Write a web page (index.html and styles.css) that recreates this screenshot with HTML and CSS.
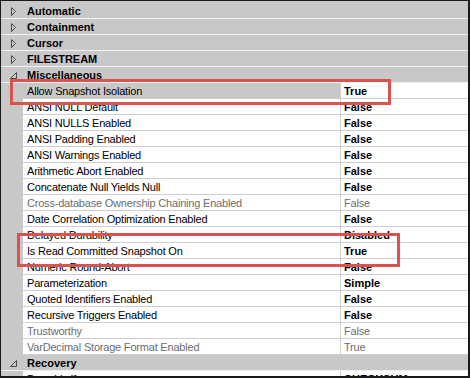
FILE: index.html
```html
<!DOCTYPE html>
<html lang="en">
<head>
    <meta charset="UTF-8">
    <meta name="viewport" content="width=device-width, initial-scale=1.0">
    <title>Database Properties - Options</title>
    <link rel="stylesheet" href="styles.css">
</head>
<body>

<div class="property-grid">
    <div class="category">
        <span class="toggle"><svg width="22" height="15"><polygon points="10.5,4.5 14.5,8.5 10.5,12.5" /></svg></span>
        <span class="label">Automatic</span>
    </div>
    <div class="category">
        <span class="toggle"><svg width="22" height="15"><polygon points="10.5,4.5 14.5,8.5 10.5,12.5" /></svg></span>
        <span class="label">Containment</span>
    </div>
    <div class="category">
        <span class="toggle"><svg width="22" height="15"><polygon points="10.5,4.5 14.5,8.5 10.5,12.5" /></svg></span>
        <span class="label">Cursor</span>
    </div>
    <div class="category">
        <span class="toggle"><svg width="22" height="15"><polygon points="10.5,4.5 14.5,8.5 10.5,12.5" /></svg></span>
        <span class="label">FILESTREAM</span>
    </div>
    <div class="category">
        <span class="toggle"><svg width="22" height="15"><polygon points="15.5,5.5 15.5,11.5 9.5,11.5" /></svg></span>
        <span class="label">Miscellaneous</span>
    </div>

    <div class="property selected"><span class="gutter"></span><span class="name">Allow Snapshot Isolation</span><span class="value">True</span></div>
    <div class="property"><span class="gutter"></span><span class="name">ANSI NULL Default</span><span class="value">False</span></div>
    <div class="property"><span class="gutter"></span><span class="name">ANSI NULLS Enabled</span><span class="value">False</span></div>
    <div class="property"><span class="gutter"></span><span class="name">ANSI Padding Enabled</span><span class="value">False</span></div>
    <div class="property"><span class="gutter"></span><span class="name">ANSI Warnings Enabled</span><span class="value">False</span></div>
    <div class="property"><span class="gutter"></span><span class="name">Arithmetic Abort Enabled</span><span class="value">False</span></div>
    <div class="property"><span class="gutter"></span><span class="name">Concatenate Null Yields Null</span><span class="value">False</span></div>
    <div class="property readonly"><span class="gutter"></span><span class="name">Cross-database Ownership Chaining Enabled</span><span class="value">False</span></div>
    <div class="property"><span class="gutter"></span><span class="name">Date Correlation Optimization Enabled</span><span class="value">False</span></div>
    <div class="property"><span class="gutter"></span><span class="name">Delayed Durability</span><span class="value">Disabled</span></div>
    <div class="property"><span class="gutter"></span><span class="name">Is Read Committed Snapshot On</span><span class="value">True</span></div>
    <div class="property"><span class="gutter"></span><span class="name">Numeric Round-Abort</span><span class="value">False</span></div>
    <div class="property"><span class="gutter"></span><span class="name">Parameterization</span><span class="value">Simple</span></div>
    <div class="property"><span class="gutter"></span><span class="name">Quoted Identifiers Enabled</span><span class="value">False</span></div>
    <div class="property"><span class="gutter"></span><span class="name">Recursive Triggers Enabled</span><span class="value">False</span></div>
    <div class="property readonly"><span class="gutter"></span><span class="name">Trustworthy</span><span class="value">False</span></div>
    <div class="property readonly"><span class="gutter"></span><span class="name">VarDecimal Storage Format Enabled</span><span class="value">True</span></div>

    <div class="category">
        <span class="toggle"><svg width="22" height="15"><polygon points="15.5,5.5 15.5,11.5 9.5,11.5" /></svg></span>
        <span class="label">Recovery</span>
    </div>
    <div class="property"><span class="gutter"></span><span class="name">Page Verify</span><span class="value">CHECKSUM</span></div>

    <div class="mark mark-snapshot"></div>
    <div class="mark mark-rcsi"></div>
</div>

</body>
</html>
```

FILE: styles.css
```css
body {
    margin: 0;
}
.property-grid {
    position: relative;
    box-sizing: border-box;
    width: 470px;
    height: 378px;
    overflow: hidden;
    background: #c8c8c8;
    border-style: solid;
    border-color: #1a1a1a;
    border-width: 1px 2px 2px 1px;
    padding-top: 2px;
    font-family: "Liberation Sans", Arial, sans-serif;
    font-size: 11px;
    color: #000;
}
.category, .property {
    white-space: nowrap;
}
.category {
    display: grid;
    grid-template-columns: 22px 1fr;
    height: 15px;
    border-bottom: 1px solid #f2f2f2;
    font-weight: bold;
}
.category .label {
    padding: 1px 0 0 4px;
    line-height: 14px;
}
.toggle svg {
    display: block;
}
.toggle polygon {
    fill: none;
    stroke: #4a4a4a;
    stroke-width: 1;
}
.property {
    display: grid;
    grid-template-columns: 22px 318px 1fr;
    height: 16px;
}
.property .name, .property .value {
    background: #fff;
    border-bottom: 1px solid #cfcfcf;
    overflow: hidden;
    padding-top: 1px;
    line-height: 14px;
}
.property .name {
    padding-left: 4px;
    letter-spacing: -0.2px;
    border-right: 1px solid #cfcfcf;
}
.property .value {
    padding-left: 3px;
    font-weight: bold;
}
.property .gutter {
    background: #c8c8c8;
}
.property.selected .name {
    background: #c8c8c8;
}
.property.readonly .name, .property.readonly .value {
    color: #6d6d6d;
    font-weight: normal;
}
.property.readonly .value {
    letter-spacing: -0.2px;
}
.mark {
    position: absolute;
    border: 3px solid #d9534f;
    box-sizing: border-box;
}
.mark-snapshot {
    left: 9px;
    top: 78px;
    width: 381px;
    height: 26px;
}
.mark-rcsi {
    left: 16px;
    top: 232px;
    width: 383px;
    height: 34px;
}
```
